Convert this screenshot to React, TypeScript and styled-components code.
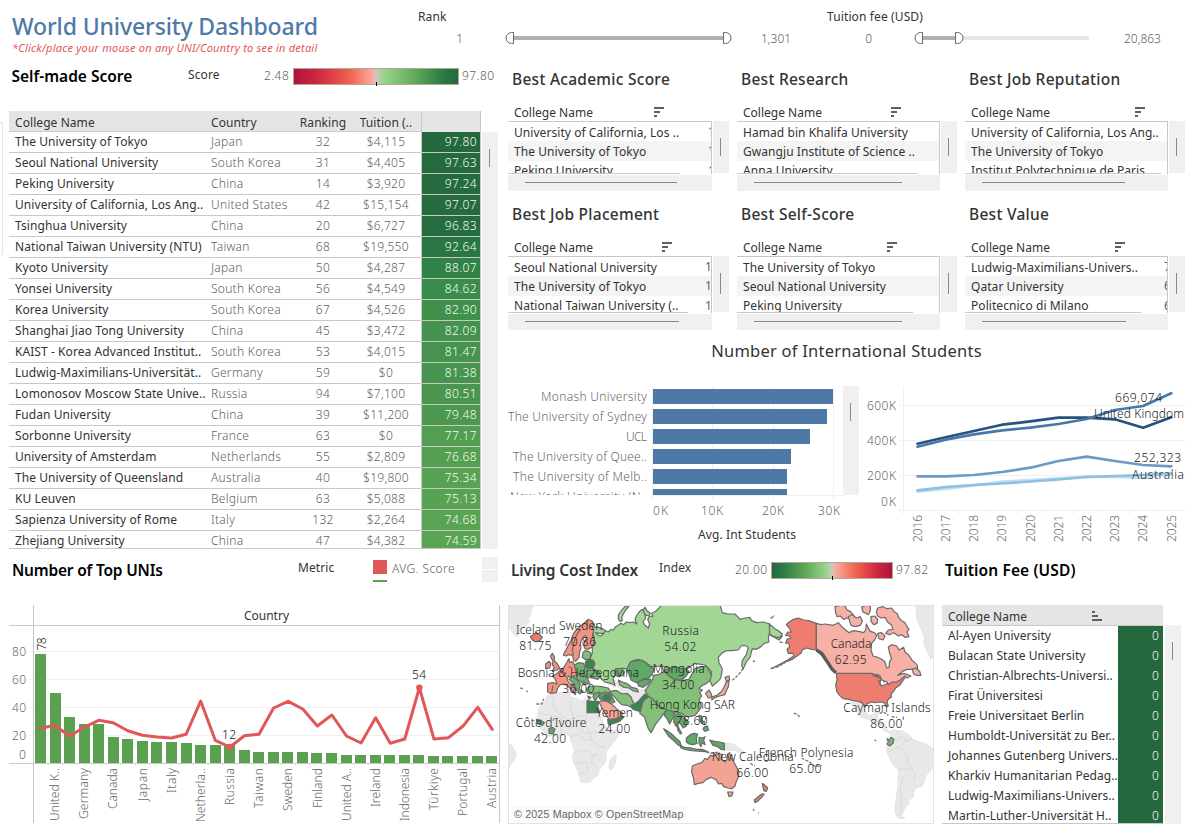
import React from "react";
import styled, { createGlobalStyle } from "styled-components";

const Global = createGlobalStyle`
  * { box-sizing: border-box; }
  body { margin: 0; background: #fff; font-family: "Noto Sans", "Open Sans", sans-serif; font-size: 12px; color: #333; overflow: hidden; }
  svg { display: block; }
  svg text { font-family: "Noto Sans", "Open Sans", sans-serif; font-size: 12px; }
`;

/* ---------- page frame ---------- */
const Page = styled.div`width: 1196px; height: 836px; overflow: hidden; background: #fff;`;
const TopBar = styled.header`display: flex; height: 60px;`;
const Middle = styled.div`display: flex; height: 488px;`;
const Bottom = styled.div`display: flex; height: 288px; padding-left: 9px;`;
const Sliver = styled.div`width: 3px; height: 133px; margin: 62px 6px 0 0; border: 1px solid #e6e6e6; border-left: 0;`;

const TitleBlock = styled.div`width: 400px; padding: 11px 0 0 12px;`;
const Title = styled.h1`margin: 0; font-size: 23px; line-height: 30px; font-weight: 500; color: #4e79a7; white-space: nowrap; letter-spacing: -0.12px;`;
const Subtitle = styled.p`margin: 0; font-size: 11px; line-height: 14px; font-style: italic; color: #e15759; white-space: nowrap; letter-spacing: 0.22px;`;

/* ---------- range filters ---------- */
const Filter = styled.div<{ $w: number }>`width: ${p => p.$w}px; padding-top: 8px;`;
const FilterLabel = styled.div`padding-left: 18px; line-height: 18px; letter-spacing: 0.12px;`;
const FilterRow = styled.div`display: flex; align-items: center; height: 24px; color: #606060; font-weight: 300;`;
const FilterMin = styled.span`width: 63px; text-align: right;`;
const SliderBox = styled.div<{ $l: number; $r: number }>`margin: 0 ${p => p.$r}px 0 ${p => p.$l}px;`;

function RangeSlider({ width, end }: { width: number; end: number }) {
  return (
    <svg width={width} height={14}>
      <rect x={8} y={5} width={width - 9} height={4} fill="#e6e6e6" />
      <rect x={8} y={5} width={end - 14} height={4} fill="#b1b1b1" />
      <rect x={width - 8} y={5} width={8} height={4} fill={end === width ? "#fff" : "#e6e6e6"} />
      <path d="M8.5 1.5H6.5A5.5 5.5 0 0 0 6.5 12.5H8.5Z" fill="#fff" stroke="#666" />
      <path d={`M${end - 8.5} 1.5h2a5.5 5.5 0 0 1 0 11h-2Z`} fill="#fff" stroke="#666" />
    </svg>
  );
}

/* ---------- section headings and legends ---------- */
const HeadRow = styled.div<{ $h: number }>`display: flex; height: ${p => p.$h}px; white-space: nowrap;`;
const Heading = styled.h2<{ $w: number; $dark?: boolean; $weight?: number; $ls?: number; $pad?: number }>`
  margin: 0; width: ${p => p.$w}px; padding-left: ${p => p.$pad ?? 3}px; font-size: 15.5px; line-height: 22px;
  font-weight: ${p => p.$weight ?? 600}; color: ${p => (p.$dark ? "#000" : "#333")}; letter-spacing: ${p => p.$ls ?? 0}px;
`;
const LegendName = styled.span<{ $w: number; $lh?: number }>`width: ${p => p.$w}px; line-height: ${p => p.$lh ?? 18}px; letter-spacing: 0.1px;`;
const LegendValue = styled.span<{ $w?: number; $lh?: number }>`
  line-height: ${p => p.$lh ?? 22}px; color: #606060; font-weight: 300; letter-spacing: 0.42px; ${p => (p.$w ? `width: ${p.$w}px;` : "")}
`;
const RampSlot = styled.div`padding: 3px 3px 0 0;`;
const Ramp = styled.div<{ $w: number; $colors: string }>`
  position: relative; width: ${p => p.$w}px; height: 17px; border: 1px solid #b0a898; background: linear-gradient(90deg, ${p => p.$colors});
  &::after { content: ""; position: absolute; left: 50%; bottom: -2px; width: 1px; height: 4px; background: #000; }
`;
const RED_GREEN = "#ae123a 0%, #d32b41 16%, #ef6250 34%, #fca595 47%, #cfc8bc 50%, #97d589 55%, #5fa656 75%, #2c7c45 90%, #24693d 100%";
const GREEN_RED = "#24693d 0%, #2c7c45 10%, #5fa656 27%, #97d589 45%, #cfc8bc 50%, #fca595 54%, #ef6250 70%, #d32b41 86%, #ae123a 100%";

/* ---------- scroll bars ---------- */
const VScroll = styled.div<{ $h: number; $thumb: number }>`
  width: 16px; height: ${p => p.$h}px; background: #f0f0f0; padding: 17px 0 0 7px; flex: none;
  &::before { content: ""; display: block; width: 1px; height: ${p => p.$thumb}px; background: #888; }
`;
const HScroll = styled.div<{ $w: number; $thumb: number }>`
  width: ${p => p.$w}px; height: 16px; background: #f0f0f0; padding: 7px 0 0 17px; margin-top: 1px;
  &::before { content: ""; display: block; height: 1px; width: ${p => p.$thumb}px; background: #888; }
`;

/* ---------- score table ---------- */
const LeftColumn = styled.section`width: 491px; padding-top: 5px;`;
const ScoreWrap = styled.div`display: flex; align-items: flex-end; gap: 1px;`;
const ScoreTable = styled.div`width: 472px; height: 438px; overflow: hidden; border-bottom: 1px solid #c8c8c8;`;
const ScoreRow = styled.div<{ $head?: boolean }>`
  display: grid; grid-template-columns: 202px 84px 56px 70px 60px; height: 21px; line-height: ${p => (p.$head ? 23 : 20)}px;
  border-bottom: 1px solid #c8c8c8; white-space: nowrap; background: ${p => (p.$head ? "#e5e5e5" : "#fff")};
`;
const Cell = styled.span<{ $soft?: boolean; $center?: boolean; $pad?: number }>`
  padding-left: ${p => p.$pad ?? 0}px; text-align: ${p => (p.$center ? "center" : "left")};
  color: ${p => (p.$soft ? "#606060" : "#333")}; font-weight: ${p => (p.$soft ? 300 : 400)}; letter-spacing: ${p => (p.$soft ? 0.28 : 0.07)}px;
`;
const ScoreCell = styled.span<{ $bg: string }>`
  background: ${p => p.$bg}; border-left: 1px solid #c8c8c8; border-right: 1px solid #c8c8c8;
  color: #f4faf4; text-align: right; padding-right: 3px; letter-spacing: 0.4px; font-weight: 300;
`;

const SCORES: [string, string, string, string, number][] = [
  ["The University of Tokyo", "Japan", "32", "$4,115", 97.8],
  ["Seoul National University", "South Korea", "31", "$4,405", 97.63],
  ["Peking University", "China", "14", "$3,920", 97.24],
  ["University of California, Los Ang..", "United States", "42", "$15,154", 97.07],
  ["Tsinghua University", "China", "20", "$6,727", 96.83],
  ["National Taiwan University (NTU)", "Taiwan", "68", "$19,550", 92.64],
  ["Kyoto University", "Japan", "50", "$4,287", 88.07],
  ["Yonsei University", "South Korea", "56", "$4,549", 84.62],
  ["Korea University", "South Korea", "67", "$4,526", 82.9],
  ["Shanghai Jiao Tong University", "China", "45", "$3,472", 82.09],
  ["KAIST - Korea Advanced Institut..", "South Korea", "53", "$4,015", 81.47],
  ["Ludwig-Maximilians-Universität..", "Germany", "59", "$0", 81.38],
  ["Lomonosov Moscow State Unive..", "Russia", "94", "$7,100", 80.51],
  ["Fudan University", "China", "39", "$11,200", 79.48],
  ["Sorbonne University", "France", "63", "$0", 77.17],
  ["University of Amsterdam", "Netherlands", "55", "$2,809", 76.68],
  ["The University of Queensland", "Australia", "40", "$19,800", 75.34],
  ["KU Leuven", "Belgium", "63", "$5,088", 75.13],
  ["Sapienza University of Rome", "Italy", "132", "$2,264", 74.68],
  ["Zhejiang University", "China", "47", "$4,382", 74.59],
];

const STOPS: [number, number[]][] = [
  [74, [90, 166, 84]], [80, [76, 151, 79]], [85, [55, 139, 74]], [90, [44, 124, 69]], [98, [36, 105, 61]],
];
function scoreColor(v: number) {
  for (let i = 1; i < STOPS.length; i++) {
    const [b, cb] = STOPS[i];
    const [a, ca] = STOPS[i - 1];
    if (v <= b) return `rgb(${ca.map((c, k) => Math.round(c + ((cb[k] - c) * (v - a)) / (b - a))).join(",")})`;
  }
  return "#24693d";
}

/* ---------- ranking cards ---------- */
const RightColumn = styled.section`width: 688px; padding-left: 8px;`;
const Cards = styled.div`display: grid; grid-template-columns: 229px 228px 1fr; grid-auto-rows: 135px;`;
const Card = styled.article`padding-top: 8px;`;
const CardHead = styled.div<{ $w: number }>`
  display: flex; justify-content: space-between; align-items: center; width: ${p => p.$w}px; height: 19px; margin-top: 12px; padding: 0 16px 0 6px;
  span { line-height: 19px; padding-top: 2px; }
`;
const CardBody = styled.div`display: flex; gap: 1px;`;
const List = styled.div<{ $w: number; $h: number }>`
  width: ${p => p.$w}px; height: ${p => p.$h}px; overflow: hidden; border-top: 1px solid #c8c8c8; border-right: 1px solid #c8c8c8;
`;
const ListClip = styled.div<{ $h: number; $line: number }>`
  height: ${p => p.$h}px; overflow: hidden; background: linear-gradient(#c8c8c8, #c8c8c8) left bottom / ${p => p.$line}px 1px no-repeat;
`;
const ListInner = styled.div<{ $h: number }>`height: ${p => p.$h}px; overflow: hidden;`;
const ListRow = styled.div`
  display: flex; justify-content: space-between; height: 20px; line-height: 22px; padding-left: 6px; white-space: nowrap; overflow: hidden; letter-spacing: 0.06px;
  &:first-child { height: 19px; line-height: 21px; }
  &:nth-child(2) { background: #f4f4f4; }
  &:nth-child(3) { line-height: 20px; }
`;
const Edge = styled.span<{ $w: number }>`width: ${p => p.$w}px; overflow: hidden; color: #606060; line-height: 20px;`;

function SortIcon({ up }: { up?: boolean }) {
  return (
    <svg width={10} height={10} fill="#5f5f5f">
      <rect y={0} width={up ? 3 : 10} height={2} />
      <rect y={4} width={6} height={2} />
      <rect y={8} width={up ? 10 : 3} height={2} />
    </svg>
  );
}

const CARDS = [
  { t: "Best Academic Score", rows: ["University of California, Los ..", "The University of Tokyo", "Peking University"], e: ["1", "1", "1"], ew: 3, line: 172, thumb: 152, w: 204, h: 53 },
  { t: "Best Research", rows: ["Hamad bin Khalifa University", "Gwangju Institute of Science ..", "Anna University"], e: ["", "", ""], ew: 0, line: 180, thumb: 148, w: 203, h: 53 },
  { t: "Best Job Reputation", rows: ["University of California, Los Ang..", "The University of Tokyo", "Institut Polytechnique de Paris"], e: ["", "", ""], ew: 0, line: 196, thumb: 143, w: 203, h: 53 },
  { t: "Best Job Placement", rows: ["Seoul National University", "The University of Tokyo", "National Taiwan University (.."], e: ["1", "1", "1"], ew: 6, line: 180, thumb: 154, w: 204, h: 57 },
  { t: "Best Self-Score", rows: ["The University of Tokyo", "Seoul National University", "Peking University"], e: ["", "", ""], ew: 0, line: 176, thumb: 148, w: 203, h: 57 },
  { t: "Best Value", rows: ["Ludwig-Maximilians-Univers..", "Qatar University", "Politecnico di Milano"], e: ["7", "6", "6"], ew: 3, line: 176, thumb: 144, w: 203, h: 57 },
];

/* ---------- international students ---------- */
const IntlTitle = styled.h2`margin: 9px 0 0; width: 677px; text-align: center; font-size: 16.5px; line-height: 24px; font-weight: 400; letter-spacing: 0.24px;`;
const IntlRow = styled.div`display: flex; margin-top: 23px;`;
const ChartBox = styled.div<{ $w: number }>`width: ${p => p.$w}px; flex: none;`;

const BAR_NAMES = ["Monash University", "The University of Sydney", "UCL", "The University of Quee..", "The University of Melb..", "New York University (N.."];
const BAR_W = [180, 174, 157, 138, 134, 134];
const NAME_W = [106, 139, 21, 134, 134, 137];

function StudentBars() {
  return (
    <svg width={335} height={162}>
      <g stroke="#f0f0f0">
        {[144.5, 204.5, 265.5, 325.5].map(x => <path key={x} d={`M${x} 0V114`} />)}
        <path d="M144 109.5H335" />
      </g>
      <clipPath id="bars"><rect width={335} height={109} /></clipPath>
      <g clipPath="url(#bars)">
        {BAR_NAMES.map((n, i) => (
          <React.Fragment key={n}>
            <text x={139 - NAME_W[i]} y={15 + i * 20} textLength={NAME_W[i]} fill="#686868" fontWeight={300}>{n}</text>
            <rect x={145} y={3 + i * 20} width={BAR_W[i]} height={15} fill="#4e79a7" />
          </React.Fragment>
        ))}
      </g>
      <g fill="#686868" fontWeight={300}>
        <text x={145} y={129} textLength={15}>0K</text>
        <text x={193} y={129} textLength={22}>10K</text>
        <text x={254} y={129} textLength={22}>20K</text>
        <text x={310} y={129} textLength={22}>30K</text>
      </g>
      <text x={190} y={153} fill="#333" textLength={98}>Avg. Int Students</text>
    </svg>
  );
}

const LINES: { c: string; y: number[] }[] = [
  { c: "#bfe0f3", y: [105.7, 103, 99.3, 95.7, 94, 92.3, 90.7, 91, 92, 88] },
  { c: "#8ebfe0", y: [104.3, 101, 99, 97.5, 95.5, 93.5, 91, 90, 89, 87.5] },
  { c: "#6a9bc6", y: [90.3, 90.3, 89, 86, 81.7, 75, 70.7, 75, 79, 80.3] },
  { c: "#27517f", y: [57.7, 51.3, 45, 38.7, 35.3, 31.7, 31.7, 33.3, 41.7, 31.3] },
  { c: "#4878a8", y: [60.7, 53.7, 48.3, 44.3, 41.7, 38, 33, 24, 20, 7.3] },
];
const lineX = (i: number) => 52.5 + i * 28.2;

function StudentLines() {
  return (
    <svg width={323} height={162}>
      <g stroke="#f0f0f0">
        {[19.5, 54.5, 89.5].map(y => <path key={y} d={`M34 ${y}H320`} />)}
        <path d="M33 124.5H320M38.5 0V128" />
        {Array.from({ length: 9 }, (_, i) => <path key={i} d={`M${Math.round(66 + i * 28.2) + 0.5} 124V128`} />)}
      </g>
      <g fill="#686868" fontWeight={300}>
        <text x={2} y={24} textLength={29}>600K</text>
        <text x={2} y={59} textLength={29}>400K</text>
        <text x={2} y={94} textLength={29}>200K</text>
        <text x={16} y={120} textLength={15}>0K</text>
        {Array.from({ length: 10 }, (_, i) => (
          <text key={i} transform={`translate(${lineX(i) + 4.3} 156) rotate(-90)`} textLength={27}>{2016 + i}</text>
        ))}
      </g>
      {LINES.map(l => (
        <polyline key={l.c} fill="none" stroke={l.c} strokeWidth={2.7} strokeLinejoin="round" strokeLinecap="round"
          points={l.y.map((y, i) => `${lineX(i)},${y}`).join(" ")} />
      ))}
      <g fill="#222" fontWeight={300}>
        <text x={250} y={15.5} textLength={47}>669,074</text>
        <text x={229} y={31.5} textLength={90}>United Kingdom</text>
        <text x={269} y={76} textLength={47}>252,323</text>
        <text x={267} y={92.5} textLength={52}>Australia</text>
      </g>
    </svg>
  );
}

/* ---------- top universities ---------- */
const UniPanel = styled.section`width: 491px; padding-top: 11px;`;
const Swatch = styled.div`width: 14px; margin-right: 5px; display: flex; flex-direction: column; gap: 6px; padding-top: 1px;`;
const SwatchChip = styled.i<{ $c: string; $h: number }>`display: block; height: ${p => p.$h}px; background: ${p => p.$c};`;
const Stepper = styled.div`margin-left: auto; margin-right: 2px; margin-top: -2px; display: flex; flex-direction: column; gap: 1px; i { width: 16px; height: 12px; background: #f0f0f0; }`;

const BAR_TOPS = [654, 693, 717, 724, 724, 737, 739, 741, 742, 742, 743, 745, 745, 745, 750, 752, 752, 752, 752, 753, 753, 755, 755, 755, 755, 755, 755, 756, 756, 756, 756, 756];
const AVG = [183.3, 180.3, 191.3, 182.3, 175.3, 177.7, 185.7, 190.3, 192, 193, 189.3, 156, 195.3, 202, 190.7, 189.3, 163, 156.3, 164, 181, 170, 191, 198, 172.7, 198.3, 194, 142.7, 194, 192.7, 181, 162.3, 184.3];
const COUNTRIES: [string, number][] = [["United K..", 53], ["Germany", 51], ["Canada", 41], ["Japan", 33], ["Italy", 25], ["Netherla..", 54], ["Russia", 37], ["Taiwan", 40], ["Sweden", 43], ["Finland", 40], ["United A..", 53], ["Ireland", 39], ["Indonesia", 53], ["Türkiye", 42], ["Portugal", 48], ["Austria", 40]];
const avgX = (i: number) => 31.3 + i * 14.58;

function UniChart() {
  return (
    <svg width={491} height={219}>
      <g stroke="#f0f0f0">
        {[46.5, 74.5, 102.5, 130.5].map(y => <path key={y} d={`M20 ${y}H490`} />)}
        {Array.from({ length: 31 }, (_, i) => <path key={i} d={`M${Math.round(38.5 + i * 14.58) + 0.5} 159V162`} />)}
      </g>
      {BAR_TOPS.map((t, i) => (
        <rect key={i} x={Math.round(26 + i * 14.55)} y={t - 605} width={11} height={763 - t} fill="#59a14f" />
      ))}
      <path d="M0 20.5H491M0 158.5H491M24.5 0V218M490.5 0V218" stroke="#c8c8c8" />
      <polyline fill="none" stroke="#e15759" strokeWidth={3} strokeLinejoin="round" strokeLinecap="round"
        points={AVG.map((y, i) => `${avgX(i)},${y - 60}`).join(" ")} />
      <circle cx={avgX(13)} cy={142} r={3.2} fill="#e15759" />
      <circle cx={avgX(26)} cy={82.7} r={3.2} fill="#e15759" />
      <g fill="#686868" fontWeight={300}>
        <text x={3} y={51} textLength={14}>80</text>
        <text x={3} y={79} textLength={14}>60</text>
        <text x={3} y={107} textLength={14}>40</text>
        <text x={3} y={135} textLength={14}>20</text>
        <text x={10} y={154}>0</text>
        {COUNTRIES.map(([n, w], i) => (
          <text key={n} transform={`translate(${avgX(i * 2 + 1) + 4.2} ${163 + w}) rotate(-90)`} textLength={w}>{n}</text>
        ))}
      </g>
      <text x={235} y={15} textLength={45} fill="#333">Country</text>
      <g fontWeight={300} fill="#111">
        <text transform="translate(37 45.5) rotate(-90)" textLength={13}>78</text>
        <text x={213} y={134} textLength={14}>12</text>
        <text x={403} y={74} textLength={14}>54</text>
      </g>
    </svg>
  );
}

/* ---------- living cost map ---------- */
const MapPanel = styled.section`width: 434px; padding: 11px 0 0 8px;`;
const MapFrame = styled.div`width: 426px; height: 219px; border: 1px solid #e2e2e2; overflow: hidden;`;

const LAND = [
  "M9 15H84L80 30 76 45 70 58 74 66 60 76 50 84 42 98 36 110 28 106 20 94 9 80Z",
  "M128 285 146 280 160 278 180 277 196 276 194 286 200 292 216 296 232 304 238 296 246 298 264 304 280 304 284 340 292 360 300 375 308 386 324 392 345 388 342 402 335 415 322 432 310 446 302 458 304 476 300 490 290 500 282 512 280 524 268 532 258 544 246 548 230 548 224 536 220 520 214 502 206 486 202 470 208 452 204 438 198 425 196 410 185 404 168 406 150 408 132 408 116 396 98 375 97 358 100 325 112 312 122 298Z",
  "M328 466 334 465 333 480 328 496 322 508 314 510 312 496 316 480Z",
  "M1036 304 1060 304 1075 312 1082 336 1092 348 1104 344 1112 333 1122 336 1116 352 1122 358 1140 372 1146 388 1154 396 1166 390 1176 392 1190 392 1206 400 1222 415 1236 424 1262 430 1285 448 1287 452V500L1276 512 1262 528 1258 546 1250 560 1235 562 1226 576 1225 592 1210 600 1212 610 1202 620 1195 635 1190 648 1200 655 1180 656 1170 640 1170 620 1174 590 1178 560 1180 530 1180 510 1162 492 1154 474 1144 455 1145 440 1156 426 1160 412 1154 400 1136 390 1130 378 1112 368 1094 360 1070 352 1058 340 1050 324Z",
  "M1232 15H1287V170L1276 178 1270 160 1262 145 1256 130 1258 110 1248 86 1236 60Z",
  "M660 428 676 430 690 434 700 444 712 450 720 462 700 456 690 450 676 452 660 450Z",
  "M9 430 20 436 28 450 34 464 28 480 18 492 9 512Z",
  "M332 245 350 252 372 252 380 268 400 268 428 268 420 284 410 300 396 306 380 308 372 296 352 280Z",
  "M296 242 312 236 330 240 340 256 330 260 310 254Z",
];

const REGIONS: { c: string; d: string[] }[] = [
  { c: "#a2d695", d: [
    "M262 84 274 80 292 86 302 92 296 100 284 100 272 98 280 106 288 108 296 100 302 92 310 96 318 88 326 90 330 82 340 76 348 70 356 74 364 66 374 68 385 66 396 72 390 60 394 48 402 36 412 28 420 40 422 54 414 66 420 76 430 84 434 72 428 58 434 48 444 50 440 40 452 34 462 24 470 15 645 15 652 38 668 42 690 42 700 52 705 58 720 54 735 52 740 62 755 68 775 66 795 72 800 85 808 90 820 98 832 108 822 120 812 114 800 108 793 102 790 112 792 126 778 130 765 142 752 148 742 146 738 160 735 172 724 186 714 208 710 196 712 182 724 164 730 142 718 136 708 138 700 150 680 152 664 152 650 160 640 172 642 188 652 206 650 222 645 238 634 248 622 258 614 240 620 215 600 195 570 190 545 208 510 212 470 198 440 200 420 186 398 178 380 184 374 196 368 208 350 204 332 212 330 224 324 236 330 256 318 250 300 246 290 238 278 222 272 212 258 196 254 178 262 160 262 140 270 130 266 108Z",
    "M793 74 803 80 812 88 822 94 832 102 826 112 814 112 804 108 795 104Z",
    "M340 45 346 36 352 28 362 18 372 18 362 30 356 40 350 52 352 62 344 64 340 56Z",
    "M414 30 420 22 426 32 436 40 430 48 420 44Z",
  ] },
  { c: "#85c07a", d: [
    "M436 250 444 236 444 226 460 224 478 214 492 228 510 240 530 242 552 238 560 224 570 206 588 200 606 200 612 212 620 226 614 242 602 252 592 256 582 266 592 270 584 278 590 288 582 300 588 312 588 322 580 334 570 346 556 350 540 348 530 340 516 336 500 344 490 340 482 328 460 318 446 300 432 292 420 272Z",
    "M420 290 432 290 444 298 456 314 470 324 484 330 500 334 498 348 488 344 476 340 470 350 462 360 452 372 444 388 438 398 430 386 424 370 418 350 404 340 408 330 404 318 412 308Z",
    "M314 278 324 272 336 272 352 282 366 280 378 290 382 302 388 312 378 322 366 316 350 314 338 302 328 290Z",
    "M244 268 252 260 270 258 290 260 310 264 318 276 306 280 290 280 276 282 262 282 248 280Z",
    "M340 240 352 246 364 250 380 262 396 266 400 276 384 272 372 264 356 262 344 254Z",
    "M234 158 240 152 250 154 258 160 254 178 240 178 232 172Z",
  ] },
  { c: "#6db26e", d: [
    "M206 196 220 188 236 190 240 206 234 222 218 222 206 212Z",
    "M240 200 262 206 280 214 288 228 278 238 262 234 246 232 236 222Z",
    "M218 222 236 224 248 236 254 250 238 254 226 244 212 236Z",
    "M204 228 216 240 226 252 222 268 234 274 224 282 214 268 204 250 192 238Z",
    "M248 288 258 292 252 298Z",
    "M268 280 284 276 280 290 270 302 264 290Z",
    "M332 206 350 206 358 216 354 226 338 230 328 220Z",
  ] },
  { c: "#5fa868", d: [
    "M376 186 396 182 410 180 424 190 434 200 448 206 442 222 430 236 414 236 400 250 390 246 378 240 372 222 364 210 370 198Z",
    "M398 246 418 238 438 238 430 252 414 262 400 258Z",
    "M552 214 544 228 530 240 510 238 492 228 476 212 490 206 510 200 530 206 544 206Z",
    "M480 334 490 330 504 334 508 348 500 360 494 372 486 356 478 346Z",
    "M508 346 520 340 536 350 548 364 544 378 534 384 526 370 518 366 514 380 506 366Z",
    "M476 386 486 392 500 402 512 414 524 424 530 440 518 434 504 420 490 408Z",
    "M544 414 556 404 566 400 578 402 574 416 576 430 564 434 552 432 544 426Z",
    "M582 412 592 414 600 410 596 420 600 434 592 428 588 440 582 430Z",
    "M526 438 540 442 560 444 574 448 592 448 610 456 590 454 560 452 540 448 528 444Z",
    "M614 420 628 424 644 426 658 430 658 450 648 448 638 440 624 436Z",
    "M284 282 300 276 318 280 322 292 330 306 318 310 304 302 292 304 284 296Z",
    "M132 386 142 382 150 388 144 402 132 400Z",
    "M94 358 106 360 118 368 112 376 98 370Z",
    "M582 346 590 348 592 362 600 366 590 370 584 360Z",
    "M598 380 608 378 610 390 600 394 594 388Z",
    "M518 374 522 386 530 400 526 402 518 390Z",
  ] },
  { c: "#3c8550", d: [
    "M246 302 264 304 282 304 278 318 284 338 246 338Z",
    "M378 316 392 310 402 302 410 292 420 282 430 290 418 300 412 308 410 322 404 334 388 330 382 326Z",
    "M308 358 320 360 334 352 346 346 356 352 344 364 326 370 310 374Z",
    "M242 184 254 178 264 180 270 192 264 204 248 206 240 196Z",
    "M290 294 300 284 314 284 318 296 312 306 300 300Z",
  ] },
  { c: "#74ba72", d: ["M1146 416 1152 420 1158 412 1166 418 1164 430 1154 438 1146 432 1150 426Z"] },
  { c: "#f4937f", d: [
    "M176 162 184 148 190 136 198 122 202 108 210 94 222 82 236 70 250 58 262 64 268 74 260 76 266 92 262 108 268 122 262 140 250 148 240 146 236 136 240 122 246 112 240 106 232 116 226 130 228 144 224 156 222 172 212 184 206 180 202 166 190 164 184 168 176 166Z",
    "M226 88 218 100 210 116 206 134 202 150 206 166",
    "M186 186 192 176 194 188 204 184 208 196 212 210 214 226 200 232 190 228 186 240 194 250 206 258 214 270 206 270 204 278 196 266 186 256 176 252 166 254 158 264 154 278 136 280 128 276 128 250 144 248 156 252 150 236 142 228 154 222 168 210 178 200Z",
    "M136 168 142 160 148 170 148 182 156 190 164 204 156 210 142 214 148 202 142 194 144 184Z",
    "M122 192 132 184 138 190 134 204 122 206Z",
    "M204 276 214 276 210 284Z",
  ] },
  { c: "#f6a898", d: [
    "M282 306 296 302 310 306 324 316 334 326 344 334 354 340 344 352 330 356 314 358 306 350 298 336 290 322Z",
    "M602 280 612 270 618 280 620 292 610 294Z",
    "M664 246 672 244 670 260 664 272 660 284 644 288 632 292 620 300 622 290 636 286 648 276 656 264Z",
    "M660 232 672 228 674 240 664 244Z",
  ] },
  { c: "#f4a293", d: [
    "M562 498 576 492 590 488 600 476 608 478 616 466 628 468 636 460 652 464 648 476 660 486 666 478 668 462 674 458 678 472 686 486 694 500 702 516 700 532 694 544 690 558 680 566 668 564 656 560 650 550 640 552 634 540 618 532 604 538 594 548 580 550 568 554 566 536 560 516Z",
    "M668 576 684 576 680 588 672 590Z",
  ] },
  { c: "#ee7d70", d: [
    "M844 74 852 66 866 58 880 54 896 60 912 62 934 70 934 150 920 148 904 144 892 150 888 160 876 168 862 178 846 184 826 194 798 206 826 192 848 180 866 168 864 160 850 160 846 148 854 140 850 128 842 130 846 118 858 114 854 108 842 106 848 96 860 96 852 84Z",
    "M994 220 1098 220 1108 228 1118 226 1128 238 1124 252 1130 258 1144 252 1154 248 1164 244 1178 238 1190 232 1200 234 1192 244 1184 256 1172 264 1166 274 1158 282 1160 290 1150 298 1146 306 1150 318 1144 320 1138 308 1124 306 1110 308 1098 306 1086 312 1080 320 1070 308 1060 304 1046 302 1030 298 1014 296 1004 286 996 276 992 256 996 240Z",
    "M76 110 84 104 94 98 104 104 112 112 106 120 94 126 84 122Z",
    "M772 550 782 558 788 564 784 574 776 572Z",
    "M770 582 778 582 770 592 760 602 750 608 748 600 758 592Z",
  ] },
  { c: "#f6b0a6", d: [
    "M934 70 948 74 960 72 985 76 1000 68 1012 82 1022 90 1032 98 1046 92 1060 94 1076 98 1082 90 1084 72 1090 84 1096 94 1108 98 1116 106 1110 118 1100 130 1098 150 1104 168 1118 172 1130 178 1140 186 1145 204 1152 202 1154 184 1160 176 1154 160 1150 140 1160 134 1175 138 1182 150 1196 142 1200 156 1210 164 1222 182 1236 194 1238 206 1222 208 1206 208 1192 214 1178 226 1194 220 1204 222 1218 228 1206 234 1200 228 1186 240 1174 246 1162 246 1150 254 1146 246 1130 240 1124 226 1098 220 994 220 984 208 974 192 962 172 952 156 934 150Z",
    "M990 20 1006 16 1020 18 1026 30 1036 34 1046 46 1040 56 1026 54 1016 58 1006 48 996 50 992 38Z",
    "M1070 22 1084 15 1096 18 1096 32 1090 44 1082 40 1074 36Z",
    "M1114 36 1118 24 1134 20 1146 26 1160 24 1168 36 1176 40 1182 54 1190 62 1200 68 1206 80 1212 88 1206 96 1212 110 1200 112 1190 104 1180 108 1166 98 1154 104 1142 100 1150 90 1164 88 1160 76 1148 66 1140 52 1128 54 1118 48Z",
    "M1030 50 1042 44 1054 54 1066 50 1072 64 1066 76 1052 80 1038 76 1034 64Z",
    "M1098 50 1110 48 1118 58 1116 70 1106 74 1098 64Z",
    "M1118 100 1130 98 1140 108 1134 120 1122 116Z",
    "M1222 208 1232 204 1244 214 1248 226 1236 226 1226 222Z",
  ] },
];

const MAP_LABELS: [string, number, number, number][] = [
  ["Iceland", 33, 103, 118], ["81.75", 43, 150, 96], ["Sweden", 162, 90, 130], ["70.86", 175, 137, 98],
  ["Russia", 472, 105, 110], ["54.02", 478, 152, 96], ["Bosnia & Herzegovina", 38, 231, 364], ["36.00", 172, 278, 96],
  ["Mongolia", 443, 219, 156], ["34.00", 472, 266, 96], ["Hong Kong SAR", 434, 328, 256], ["78.60", 512, 375, 96],
  ["Yemen", 273, 351, 111], ["24.00", 280, 398, 96], ["Côte d’Ivoire", 32, 381, 212], ["42.00", 87, 428, 96],
  ["Canada", 977, 144, 122], ["62.95", 989, 191, 96], ["Cayman Islands", 1015, 335, 262], ["86.00", 1096, 383, 96],
  ["New Caledonia", 620, 482, 246], ["66.00", 694, 531, 96], ["French Polynesia", 761, 471, 284], ["65.00", 853, 519, 96],
];

function WorldMap() {
  return (
    <svg width={424} height={217} viewBox="12 18 1272 651">
      <g fill="#e8e8e8" stroke="#dedede" strokeWidth={2}>
        {LAND.map(d => <path key={d} d={d} />)}
        <path fill="none" stroke="#d0d0d0" d="M146 290 142 306 150 330 170 346 190 360 210 350 240 345M200 300 196 316 205 350M104 340 130 345 160 350 180 370 190 380 220 380 240 400 270 396 300 400M170 350 166 380 170 404M196 410 220 404 240 420 262 420 280 440 300 440M215 450 230 455 250 452 262 466 280 462M206 486 230 490 245 486 250 510 240 520 225 520M262 466 260 490 280 500M246 340 240 366 250 390 262 420M1150 455 1164 448 1180 440 1196 452 1210 470 1206 484 1216 500 1230 520 1228 540M1160 415 1176 420 1190 410 1200 420 1190 436M1222 415 1206 424 1200 420M1182 510 1200 506 1216 512M1196 530 1186 560 1190 600 1186 640M1176 392 1180 410" />
      </g>
      {REGIONS.map(r => (
        <g key={r.c} fill={r.c} stroke="#6a6a6a" strokeWidth={3.6} strokeLinejoin="round">
          {r.d.map(d => <path key={d} d={d} />)}
        </g>
      ))}
      <path d="M934 150 944 156 952 164 960 176 970 190 980 206 992 218" fill="none" stroke="#5a5a5a" strokeWidth={10} />
      <path d="M793 72V102M108 398 120 404M714 206 704 220 690 234 678 244M800 205 820 200 840 188M866 340 876 342 884 350M736 490 750 498M780 484 800 480M890 474 900 480 912 484 930 500 950 496M1108 420 1114 423M604 456 614 460 640 456M46 264 54 266M64 272 68 276M94 312 110 312 116 296M1124 340 1136 336 1150 346M1160 350 1176 352M1194 350 1196 360M604 350 598 366M596 366 604 380 612 392M796 54 804 50 800 56M744 628 748 632M760 640 762 638M824 126 834 128M744 182 750 186" fill="none" stroke="#777" strokeWidth={4} strokeDasharray="9 4" />
      <path d="M1108 228 1122 232M1120 240 1128 256M1134 246 1142 244M264 206 276 222M254 222 262 234M234 244 244 250M144 256 140 278M168 212 180 220M190 200 200 204M470 198 476 212" fill="none" stroke="#6a6a6a" strokeWidth={3.4} />
      <rect x={18} y={618} width={528} height={46} fill="#fafafa" />
      <g fill="#1c1c1c" fontWeight={300}>
        {MAP_LABELS.map(([t, x, y, w]) => <text key={t + x} x={x} y={y} textLength={w} style={{ fontSize: 36 }}>{t}</text>)}
      </g>
      <text x={27} y={654} textLength={508} fill="#666" style={{ fontFamily: "Liberation Sans, sans-serif", fontSize: 32 }}>© 2025 Mapbox © OpenStreetMap</text>
    </svg>
  );
}

/* ---------- tuition table ---------- */
const FeePanel = styled.section`width: 253px; padding: 11px 0 0 8px;`;
const FeeBody = styled.div`display: flex; align-items: flex-end; gap: 2px;`;
const FeeTable = styled.div`width: 221px; height: 219px; overflow: hidden; border-bottom: 1px solid #c8c8c8;`;
const FeeHead = styled.div`display: flex; justify-content: space-between; align-items: center; height: 21px; padding: 2px 61px 0 6px; background: #e5e5e5; border-bottom: 1px solid #c8c8c8;`;
const FeeRow = styled.div`display: grid; grid-template-columns: 176px 45px; height: 20px; line-height: 20px; white-space: nowrap; letter-spacing: 0.05px;`;
const FeeName = styled.span`padding-left: 6px;`;
const FeeValue = styled.span`background: #24693d; color: #f4faf4; text-align: right; padding-right: 4px; font-weight: 300;`;
const FEES = ["Al-Ayen University", "Bulacan State University", "Christian-Albrechts-Universi..", "Firat Üniversitesi", "Freie Universitaet Berlin", "Humboldt-Universität zu Ber..", "Johannes Gutenberg Univers..", "Kharkiv Humanitarian Pedag..", "Ludwig-Maximilians-Univers..", "Martin-Luther-Universität H.."];

export default function App() {
  return (
    <Page>
      <Global />
      <TopBar>
        <TitleBlock>
          <Title>World University Dashboard</Title>
          <Subtitle>*Click/place your mouse on any UNI/Country to see in detail</Subtitle>
        </TitleBlock>
        <Filter $w={409}>
          <FilterLabel>Rank</FilterLabel>
          <FilterRow>
            <FilterMin>1</FilterMin>
            <SliderBox $l={42} $r={29}><RangeSlider width={227} end={227} /></SliderBox>
            <span>1,301</span>
          </FilterRow>
        </Filter>
        <Filter $w={380}>
          <FilterLabel>Tuition fee (USD)</FilterLabel>
          <FilterRow>
            <FilterMin>0</FilterMin>
            <SliderBox $l={42} $r={35}><RangeSlider width={175} end={50} /></SliderBox>
            <span>20,863</span>
          </FilterRow>
        </Filter>
      </TopBar>

      <Middle>
        <Sliver />
        <LeftColumn>
          <HeadRow $h={46}>
            <Heading $w={179} $dark $pad={2.5}>Self-made Score</Heading>
            <LegendName $w={76} $lh={20}>Score</LegendName>
            <LegendValue $w={29}>2.48</LegendValue>
            <RampSlot><Ramp $w={166} $colors={RED_GREEN} /></RampSlot>
            <LegendValue>97.80</LegendValue>
          </HeadRow>
          <ScoreWrap>
            <ScoreTable>
              <ScoreRow $head>
                <Cell $pad={6}>College Name</Cell>
                <Cell>Country</Cell>
                <Cell $center>Ranking</Cell>
                <Cell $center>Tuition (..</Cell>
                <ScoreCell $bg="#e5e5e5" />
              </ScoreRow>
              {SCORES.map(r => (
                <ScoreRow key={r[0]}>
                  <Cell $pad={6}>{r[0]}</Cell>
                  <Cell $soft>{r[1]}</Cell>
                  <Cell $soft $center>{r[2]}</Cell>
                  <Cell $soft $center>{r[3]}</Cell>
                  <ScoreCell $bg={scoreColor(r[4])}>{r[4].toFixed(2)}</ScoreCell>
                </ScoreRow>
              ))}
            </ScoreTable>
            <VScroll $h={417} $thumb={18} />
          </ScoreWrap>
        </LeftColumn>

        <RightColumn>
          <Cards>
            {CARDS.map(c => (
              <Card key={c.t}>
                <Heading $w={220} $weight={500} $pad={4} $ls={0.27}>{c.t}</Heading>
                <CardHead $w={c.line}><span>College Name</span><SortIcon /></CardHead>
                <CardBody>
                  <List $w={c.w} $h={c.h}>
                    <ListClip $h={c.h - 1} $line={c.line}>
                      <ListInner $h={c.h - 2}>
                        {c.rows.map((r, i) => (
                          <ListRow key={r}><span>{r}</span><Edge $w={c.ew}>{c.e[i]}</Edge></ListRow>
                        ))}
                      </ListInner>
                    </ListClip>
                  </List>
                  <VScroll $h={c.h - 1} $thumb={c.h === 53 ? 18 : 21} />
                </CardBody>
                <HScroll $w={c.w} $thumb={c.thumb} />
              </Card>
            ))}
          </Cards>
          <IntlTitle>Number of International Students</IntlTitle>
          <IntlRow>
            <ChartBox $w={335}><StudentBars /></ChartBox>
            <VScroll $h={109} $thumb={18} />
            <ChartBox $w={6} />
            <ChartBox $w={323}><StudentLines /></ChartBox>
          </IntlRow>
        </RightColumn>
      </Middle>

      <Bottom>
        <UniPanel>
          <HeadRow $h={46}>
            <Heading $w={289} $dark $ls={-0.2}>Number of Top UNIs</Heading>
            <LegendName $w={75}>Metric</LegendName>
            <Swatch><SwatchChip $c="#e15759" $h={14} /><SwatchChip $c="#59a14f" $h={2} /></Swatch>
            <LegendValue $lh={19}>AVG. Score</LegendValue>
            <Stepper><i /><i /></Stepper>
          </HeadRow>
          <UniChart />
        </UniPanel>
        <MapPanel>
          <HeadRow $h={46}>
            <Heading $w={151} $ls={-0.15}>Living Cost Index</Heading>
            <LegendName $w={76}>Index</LegendName>
            <LegendValue $w={36}>20.00</LegendValue>
            <RampSlot><Ramp $w={122} $colors={GREEN_RED} /></RampSlot>
            <LegendValue>97.82</LegendValue>
          </HeadRow>
          <MapFrame><WorldMap /></MapFrame>
        </MapPanel>
        <FeePanel>
          <HeadRow $h={46}><Heading $w={200} $dark $ls={0.12}>Tuition Fee (USD)</Heading></HeadRow>
          <FeeBody>
            <FeeTable>
              <FeeHead><span>College Name</span><SortIcon up /></FeeHead>
              {FEES.map(f => (
                <FeeRow key={f}><FeeName>{f}</FeeName><FeeValue>0</FeeValue></FeeRow>
              ))}
            </FeeTable>
            <VScroll $h={199} $thumb={18} />
          </FeeBody>
        </FeePanel>
      </Bottom>
    </Page>
  );
}
